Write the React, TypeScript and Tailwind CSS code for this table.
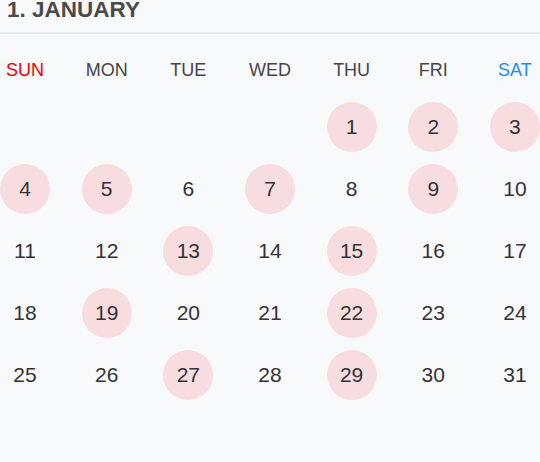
import React from 'react';

const DAYS = ['SUN', 'MON', 'TUE', 'WED', 'THU', 'FRI', 'SAT'];
const MARKED = [1, 2, 3, 4, 5, 7, 9, 13, 15, 19, 22, 27, 29];
const FIRST_WEEKDAY = 4; // Jan 1 falls on a Thursday
const DAYS_IN_MONTH = 31;

const dayColor = (i: number) => {
  if (i === 0) return 'text-[#f00000]';
  if (i === 6) return 'text-[#1c8cf0]';
  return 'text-[#454545]';
};

export default function App() {
  const cells: (number | null)[] = [];
  for (let i = 0; i < FIRST_WEEKDAY; i++) cells.push(null);
  for (let d = 1; d <= DAYS_IN_MONTH; d++) cells.push(d);

  const weeks: (number | null)[][] = [];
  for (let i = 0; i < cells.length; i += 7) {
    const week = cells.slice(i, i + 7);
    while (week.length < 7) week.push(null);
    weeks.push(week);
  }

  return (
    <div className="min-h-[462px] w-[540px] bg-[#f8f9fb] font-['Liberation_Sans',Arial,sans-serif]">
      <div className="h-[34px] border-b-2 border-[#e6e8eb] pl-[7px]">
        <h1 className="text-[22.5px] leading-[20px] font-bold text-[#4a4a4a]">1. JANUARY</h1>
      </div>

      <div className="mt-[26px] flex justify-between">
        {DAYS.map((d, i) => (
          <div key={d} className={`w-[50px] text-center text-[18px] leading-[20px] ${dayColor(i)}`}>
            {d}
          </div>
        ))}
      </div>

      <div className="mt-[22px] flex flex-col gap-[12px]">
        {weeks.map((week, wi) => (
          <div key={wi} className="flex justify-between">
            {week.map((day, di) => (
              <div
                key={di}
                className={`flex h-[50px] w-[50px] items-center justify-center rounded-full text-[21px] text-[#333] ${
                  day && MARKED.includes(day) ? 'bg-[#f7dce0]' : ''
                }`}
              >
                {day ?? ''}
              </div>
            ))}
          </div>
        ))}
      </div>
    </div>
  );
}
